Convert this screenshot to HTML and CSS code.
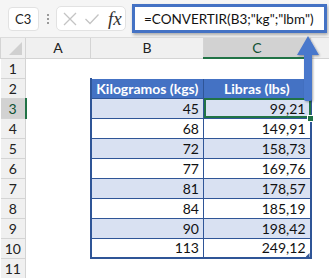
FILE: index.html
```html
<!DOCTYPE html>
<html>
<head>
<meta charset="utf-8">
<link rel="stylesheet" href="styles.css">
</head>
<body>
<div class="app">
  <div class="toolbar">
    <div class="namebox">C3</div>
    <div class="dots"><span></span><span></span><span></span></div>
    <div class="controls">
      <svg class="ico" width="16" height="16" viewBox="0 0 16 16"><path d="M2 2 L14 14 M14 2 L2 14" stroke="#c4c4c4" stroke-width="1.3" fill="none"/></svg>
      <svg class="ico" width="16" height="16" viewBox="0 0 16 16"><path d="M1.5 8 L6 12.5 L14.5 3.5" stroke="#c4c4c4" stroke-width="1.3" fill="none"/></svg>
      <span class="fx">fx</span>
    </div>
    <div class="formula">=CONVERTIR(B3;"kg";"lbm")</div>
  </div>
  <table class="sheet">
    <colgroup>
      <col class="c-rh"><col class="c-a"><col class="c-b"><col class="c-c"><col class="c-d">
    </colgroup>
    <tr class="colhead">
      <th class="corner"><span class="tri"></span></th><th>A</th><th>B</th><th class="sel">C</th><th></th>
    </tr>
    <tr><th class="rh">1</th><td></td><td></td><td></td><td></td></tr>
    <tr><th class="rh">2</th><td></td><td class="t hd first">Kilogramos (kgs)</td><td class="t hd last">Libras (lbs)</td><td></td></tr>
    <tr class="band"><th class="rh sel">3</th><td></td><td class="t first">45</td><td class="t last active">99,21<span class="handle"></span></td><td></td></tr>
    <tr><th class="rh">4</th><td></td><td class="t first">68</td><td class="t last">149,91</td><td></td></tr>
    <tr class="band"><th class="rh">5</th><td></td><td class="t first">72</td><td class="t last">158,73</td><td></td></tr>
    <tr><th class="rh">6</th><td></td><td class="t first">77</td><td class="t last">169,76</td><td></td></tr>
    <tr class="band"><th class="rh">7</th><td></td><td class="t first">81</td><td class="t last">178,57</td><td></td></tr>
    <tr><th class="rh">8</th><td></td><td class="t first">84</td><td class="t last">185,19</td><td></td></tr>
    <tr class="band"><th class="rh">9</th><td></td><td class="t first">90</td><td class="t last">198,42</td><td></td></tr>
    <tr class="lastrow"><th class="rh">10</th><td></td><td class="t first">113</td><td class="t last">249,12<span class="mini"></span></td><td></td></tr>
    <tr><th class="rh">11</th><td></td><td></td><td></td><td></td></tr>
  </table>
  <svg class="arrow" width="30" height="70" viewBox="0 0 30 70">
    <defs>
      <filter id="sh" x="-50%" y="-20%" width="200%" height="150%">
        <feDropShadow dx="1" dy="1" stdDeviation="1.2" flood-color="#000" flood-opacity="0.35"/>
      </filter>
    </defs>
    <path d="M14 1 L25 20 L18 20 L18 64 Q18 66 16 66 L12 66 Q10 66 10 64 L10 20 L3 20 Z" fill="#4a78cc" filter="url(#sh)"/>
  </svg>
</div>
</body>
</html>
```
FILE: styles.css
```css
* { box-sizing: border-box; }
html, body { margin: 0; padding: 0; background: #fff; }
body { width: 329px; height: 278px; overflow: hidden; font-family: Lato, "Liberation Sans", sans-serif; }
.app { position: relative; width: 329px; height: 278px; overflow: hidden; }

.toolbar {
  height: 38px;
  background: #f5f5f5;
  border-bottom: 1px solid #dcdcdc;
  display: flex;
  align-items: center;
  padding-left: 8px;
}
.namebox {
  width: 31px; height: 24px;
  background: #fff;
  border: 1px solid #e2e2e2;
  border-radius: 4px;
  font-size: 13px;
  color: #222;
  display: flex; align-items: center; padding-left: 6px;
}
.dots { width: 17px; display: flex; flex-direction: column; align-items: center; gap: 2px; }
.dots span { width: 2px; height: 2px; background: #9a9a9a; }
.controls {
  width: 70px; height: 25px;
  background: #fff;
  border: 1px solid #e2e2e2;
  border-radius: 5px;
  display: flex; align-items: center;
  padding-left: 5px; gap: 6px;
}
.ico { display: block; }
.fx { font-family: "Liberation Serif", serif; font-style: italic; font-size: 19px; color: #333; margin-left: 2px; line-height: 1; }
.formula {
  margin-left: 6px;
  width: 195px; height: 29px;
  border: 3px solid #4472c4;
  background: #fff;
  box-shadow: 1px 2px 3px rgba(0,0,0,0.3);
  font-size: 13.5px;
  color: #111;
  display: flex; align-items: center;
  padding-left: 9px;
  white-space: nowrap;
}

.sheet { border-collapse: collapse; table-layout: fixed; width: 329px; font-size: 14px; }
.c-rh { width: 25px; } .c-a { width: 65px; } .c-b { width: 113px; } .c-c { width: 107px; } .c-d { width: 19px; }
.sheet tr { height: 20px; }
.sheet td, .sheet th { padding: 0; height: 20px; border: 1px solid transparent; position: relative; white-space: nowrap; overflow: visible; }
.colhead th { background: #f0f0f0; font-weight: normal; color: #222; text-align: center; border: 1px solid #d4d4d4; font-size: 14px; border-top: none; }
.colhead th.sel { background: #d2d2d2; border-bottom: 2px solid #217346; color: #0f5132; }
.corner .tri { position: absolute; right: 3px; bottom: 3px; width: 0; height: 0; border-left: 13px solid transparent; border-bottom: 13px solid #d0d0d0; }
th.rh { background: #f0f0f0; font-weight: normal; color: #222; text-align: center; border: 1px solid #d4d4d4; border-left: none; }
th.rh.sel { background: #d2d2d2; border-right: 2px solid #217346; color: #0f5132; }

td.t { border: 1px solid #2f5597; text-align: right; padding-right: 4px; color: #111; }
td.hd { background: #4472c4; color: #fff; font-weight: bold; text-align: center; padding-right: 0; }
td.first { border-left: 2px solid #2f5597; }
td.last { border-right: 2px solid #2f5597; }
.lastrow td.t { border-bottom: 2px solid #2f5597; }
.band td.t { background: #d9e1f2; }
td.active { outline: 2px solid #217346; outline-offset: -2px; }
.handle { position: absolute; right: -4px; bottom: -4px; width: 5px; height: 5px; background: #217346; border: 1px solid #fff; box-sizing: content-box; }
.mini { position: absolute; right: 0; bottom: 0; width: 4px; height: 4px; background: #2f5597; clip-path: polygon(100% 0, 100% 100%, 0 100%); }

.arrow { position: absolute; left: 294px; top: 35px; }
```
